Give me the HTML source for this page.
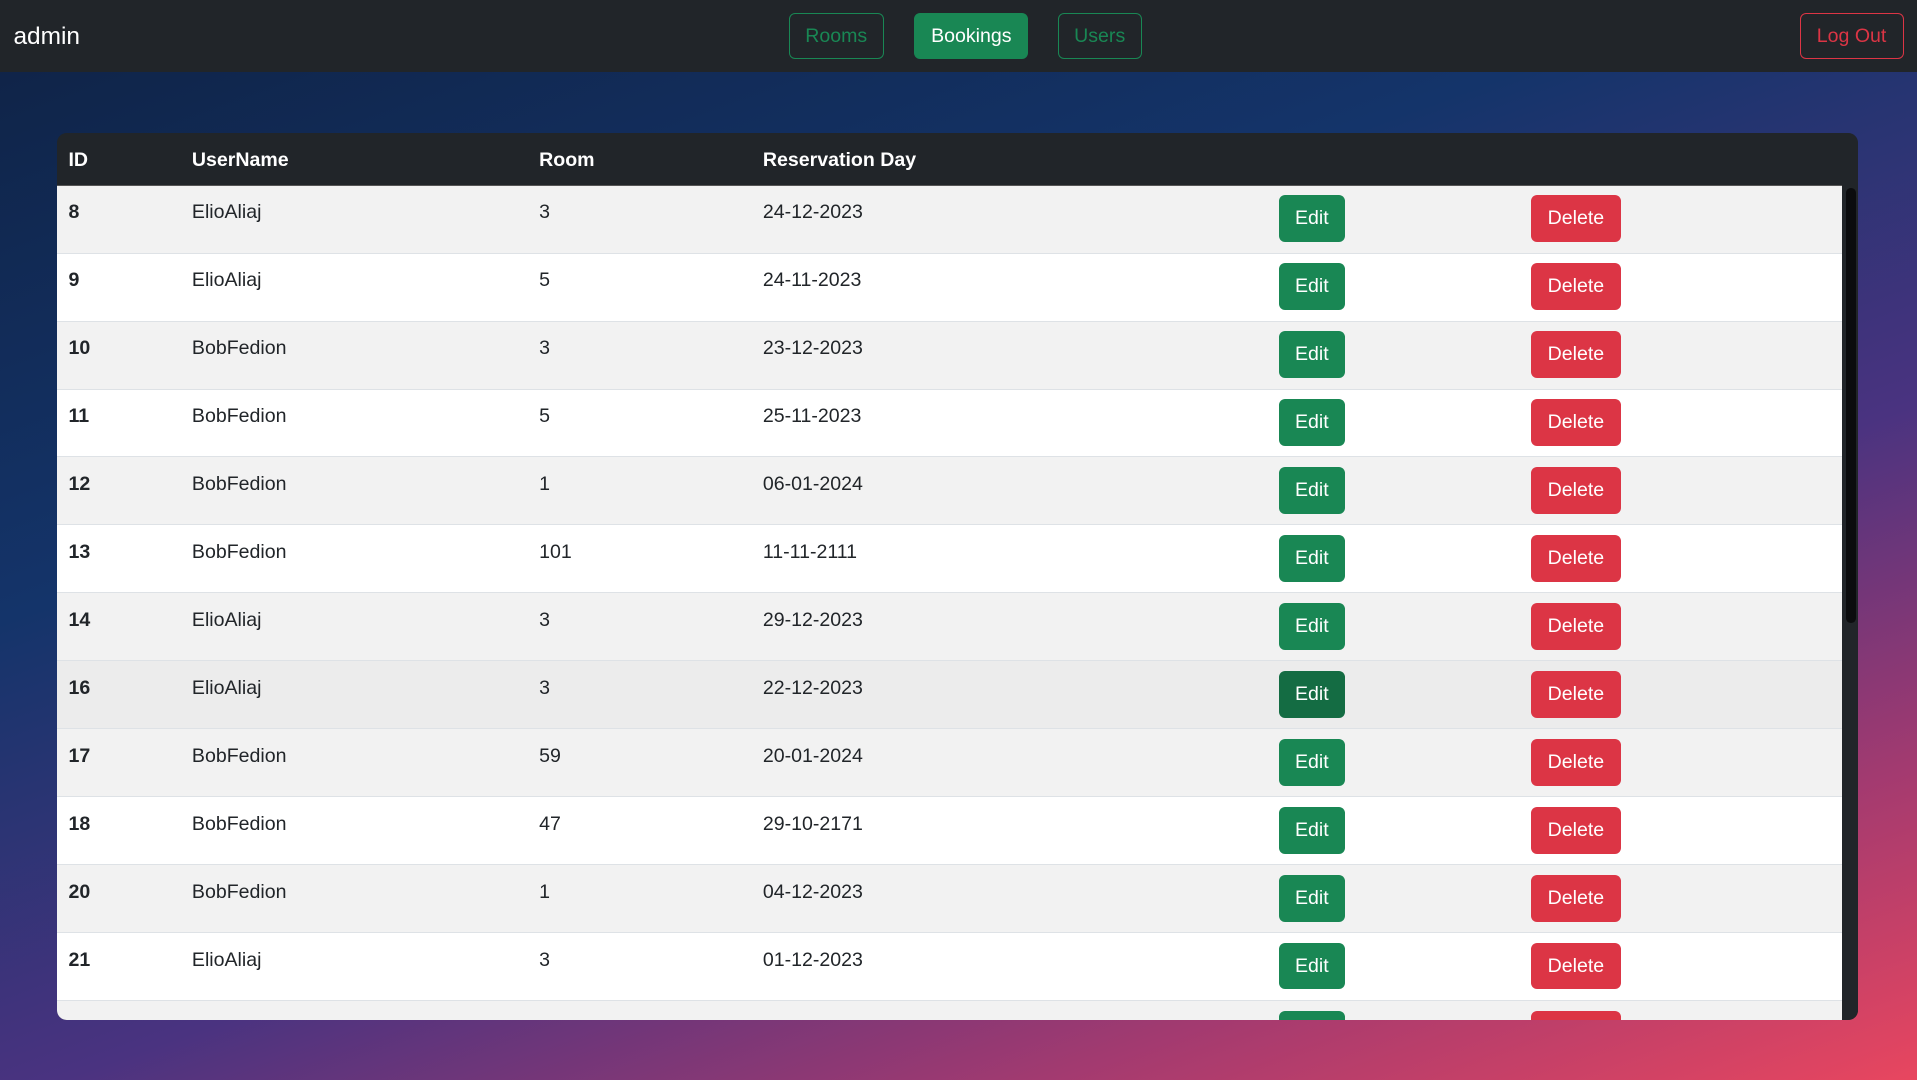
<!DOCTYPE html>
<html><head><meta charset="utf-8"><style>
html,body{margin:0;padding:0}
body{width:1568px;height:883px;zoom:1.22258;overflow:hidden;font-family:"Liberation Sans",Arial,sans-serif;
background:linear-gradient(160deg,#0f2244 0%,#14346a 35%,#4a3380 62%,#a23a70 82%,#e8465f 100%);position:relative}
.nav{position:absolute;left:0;top:0;width:1568px;height:59px;background:#212529}
.brand{position:absolute;left:11px;top:19px;color:#fff;font-size:20px}
.nb{position:absolute;top:11px;height:37px;box-sizing:border-box;border-radius:5px;font-size:16px;line-height:36px;text-align:center;border:1px solid #198754;color:#198754}
.card{position:absolute;left:47px;top:109px;width:1473px;height:725px;background:#212529;border-radius:8px;overflow:hidden}
.head{height:43px;position:relative;color:#fff;font-weight:bold;font-size:16px}
.head span{position:absolute}
.row span{position:absolute;top:13px!important}
.body{position:absolute;top:42px;left:0;width:1460px;height:683px;overflow:hidden;border-top:1px solid #555}
.row{position:relative;height:55.6px;box-sizing:border-box;border-bottom:1px solid #dee2e6;font-size:16px;color:#212529}
.row:nth-child(odd){background:#f2f2f2}.row:nth-child(even){background:#fff}
.row.h{background:#ececec}
.b{position:absolute;top:8px;height:38px;border-radius:5px;color:#fff;font-size:16px;line-height:38px;text-align:center}
.e{left:999px;width:54px;background:#198754}.d{left:1205px;width:74px;background:#dc3545}
.sb{position:absolute;left:1460px;top:43px;width:13px;height:682px;background:#212529}
.th{position:absolute;left:3px;top:2px;width:8px;height:356px;background:#0b0c0e;border-radius:4px}
</style></head><body>
<div class="nav"><div class="brand">admin</div>
<div class="nb" style="left:645px;width:78px">Rooms</div>
<div class="nb" style="left:748px;width:93px;background:#198754;color:#fff">Bookings</div>
<div class="nb" style="left:865px;width:69px">Users</div>
<div class="nb" style="left:1472px;width:85px;border-color:#dc3545;color:#dc3545">Log Out</div></div>
<div class="card">
<div class="head"><span style="left:9px;top:13px">ID</span><span style="left:110px;top:13px">UserName</span><span style="left:394px;top:13px">Room</span><span style="left:577px;top:13px">Reservation Day</span></div>
<div class="body">
<div class="row"><span style="left:9px;top:12px;font-weight:bold">8</span><span style="left:110px;top:12px">ElioAliaj</span><span style="left:394px;top:12px">3</span><span style="left:577px;top:12px">24-12-2023</span><div class="b e">Edit</div><div class="b d">Delete</div></div>
<div class="row"><span style="left:9px;top:12px;font-weight:bold">9</span><span style="left:110px;top:12px">ElioAliaj</span><span style="left:394px;top:12px">5</span><span style="left:577px;top:12px">24-11-2023</span><div class="b e">Edit</div><div class="b d">Delete</div></div>
<div class="row"><span style="left:9px;top:12px;font-weight:bold">10</span><span style="left:110px;top:12px">BobFedion</span><span style="left:394px;top:12px">3</span><span style="left:577px;top:12px">23-12-2023</span><div class="b e">Edit</div><div class="b d">Delete</div></div>
<div class="row"><span style="left:9px;top:12px;font-weight:bold">11</span><span style="left:110px;top:12px">BobFedion</span><span style="left:394px;top:12px">5</span><span style="left:577px;top:12px">25-11-2023</span><div class="b e">Edit</div><div class="b d">Delete</div></div>
<div class="row"><span style="left:9px;top:12px;font-weight:bold">12</span><span style="left:110px;top:12px">BobFedion</span><span style="left:394px;top:12px">1</span><span style="left:577px;top:12px">06-01-2024</span><div class="b e">Edit</div><div class="b d">Delete</div></div>
<div class="row"><span style="left:9px;top:12px;font-weight:bold">13</span><span style="left:110px;top:12px">BobFedion</span><span style="left:394px;top:12px">101</span><span style="left:577px;top:12px">11-11-2111</span><div class="b e">Edit</div><div class="b d">Delete</div></div>
<div class="row"><span style="left:9px;top:12px;font-weight:bold">14</span><span style="left:110px;top:12px">ElioAliaj</span><span style="left:394px;top:12px">3</span><span style="left:577px;top:12px">29-12-2023</span><div class="b e">Edit</div><div class="b d">Delete</div></div>
<div class="row h"><span style="left:9px;top:12px;font-weight:bold">16</span><span style="left:110px;top:12px">ElioAliaj</span><span style="left:394px;top:12px">3</span><span style="left:577px;top:12px">22-12-2023</span><div class="b e" style="background:#146c43">Edit</div><div class="b d">Delete</div></div>
<div class="row"><span style="left:9px;top:12px;font-weight:bold">17</span><span style="left:110px;top:12px">BobFedion</span><span style="left:394px;top:12px">59</span><span style="left:577px;top:12px">20-01-2024</span><div class="b e">Edit</div><div class="b d">Delete</div></div>
<div class="row"><span style="left:9px;top:12px;font-weight:bold">18</span><span style="left:110px;top:12px">BobFedion</span><span style="left:394px;top:12px">47</span><span style="left:577px;top:12px">29-10-2171</span><div class="b e">Edit</div><div class="b d">Delete</div></div>
<div class="row"><span style="left:9px;top:12px;font-weight:bold">20</span><span style="left:110px;top:12px">BobFedion</span><span style="left:394px;top:12px">1</span><span style="left:577px;top:12px">04-12-2023</span><div class="b e">Edit</div><div class="b d">Delete</div></div>
<div class="row"><span style="left:9px;top:12px;font-weight:bold">21</span><span style="left:110px;top:12px">ElioAliaj</span><span style="left:394px;top:12px">3</span><span style="left:577px;top:12px">01-12-2023</span><div class="b e">Edit</div><div class="b d">Delete</div></div>
<div class="row"><div class="b e">Edit</div><div class="b d">Delete</div></div>
</div>
<div class="sb"><div class="th"></div></div>
</div>
</body></html>
